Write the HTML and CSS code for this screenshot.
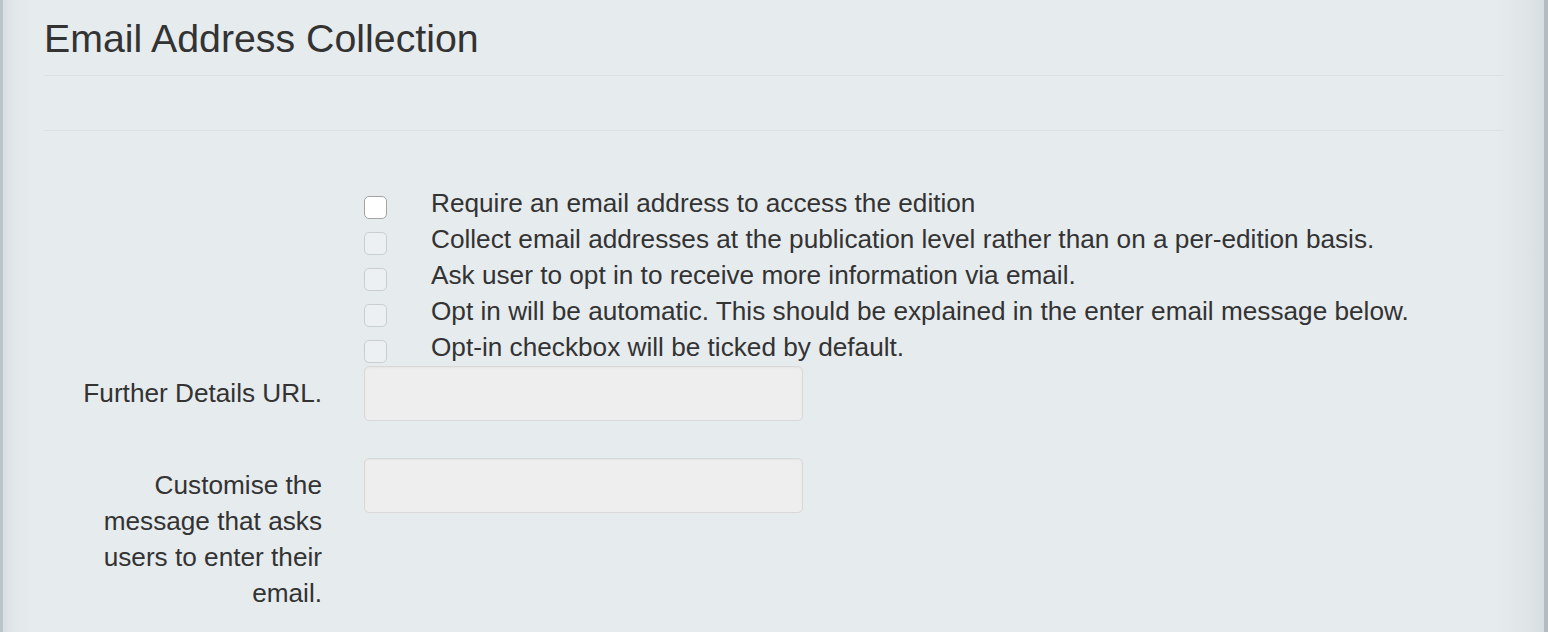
FILE: index.html
```html
<!DOCTYPE html>
<html lang="en">
<head>
<meta charset="utf-8">
<title>Email Address Collection</title>
<link rel="stylesheet" href="styles.css">
</head>
<body>
<div class="panel">
  <h2 class="title">Email Address Collection</h2>
  <hr class="rule">
  <div class="spacer"></div>
  <hr class="rule">
  <form class="form">
    <div class="row">
      <div class="label"></div>
      <div class="control checks">
        <label class="check"><input type="checkbox" class="box"><span>Require an email address to access the edition</span></label>
        <label class="check"><input type="checkbox" class="box" disabled><span>Collect email addresses at the publication level rather than on a per-edition basis.</span></label>
        <label class="check"><input type="checkbox" class="box" disabled><span>Ask user to opt in to receive more information via email.</span></label>
        <label class="check"><input type="checkbox" class="box" disabled><span>Opt in will be automatic. This should be explained in the enter email message below.</span></label>
        <label class="check"><input type="checkbox" class="box" disabled><span>Opt-in checkbox will be ticked by default.</span></label>
      </div>
    </div>
    <div class="row">
      <label class="label">Further Details URL.</label>
      <div class="control"><input type="text" class="field" disabled></div>
    </div>
    <div class="row">
      <label class="label">Customise the<br>message that asks<br>users to enter their<br>email.</label>
      <div class="control"><input type="text" class="field" disabled></div>
    </div>
  </form>
</div>
</body>
</html>
```

FILE: styles.css
```css
html, body {
  margin: 0;
  padding: 0;
  height: 100%;
}
body {
  font-family: "Liberation Sans", Arial, sans-serif;
  color: #333333;
  background: linear-gradient(to right,
    #bcc4cb 0, #bcc4cb 3px,
    #d9dfe3 3px, #e2e7ea 14px, #e6ebee 32px,
    #e6ebee calc(100% - 52px), #dfe4e7 calc(100% - 20px), #d8dde1 calc(100% - 4px),
    #b4bcc3 calc(100% - 4px), #b4bcc3 100%);
  overflow: hidden;
}
.panel {
  padding: 17px 45px 0 44px;
}
.title {
  margin: 0 0 15px;
  font-size: 39.3px;
  line-height: 43px;
  font-weight: normal;
  color: #333333;
}
.rule {
  margin: 0;
  border: 0;
  border-top: 1px solid #dfe1e1;
  height: 0;
}
.spacer {
  height: 54px;
}
.form {
  margin-top: 54px;
  font-size: 26.2px;
  line-height: 36px;
}
.row {
  display: grid;
  grid-template-columns: 278px 439px;
  column-gap: 42px;
  margin-bottom: 37px;
}
.row:first-child {
  margin-bottom: 1px;
}
.label {
  text-align: right;
  padding-top: 9px;
}
.row:first-child .label {
  padding-top: 0;
}
.checks {
  display: flex;
  flex-direction: column;
  white-space: nowrap;
}
.check {
  display: flex;
  align-items: flex-start;
  gap: 44px;
  height: 36px;
}
.box {
  appearance: none;
  -webkit-appearance: none;
  margin: 11px 0 0 0;
  width: 23px;
  height: 23px;
  flex: none;
  border: 1px solid #a4a4a4;
  border-radius: 5px;
  background: #ffffff;
  box-sizing: border-box;
}
.box:disabled {
  border-color: #c9ced1;
  background: #edf0f2;
}
.field {
  display: block;
  box-sizing: border-box;
  width: 439px;
  height: 55px;
  margin: 0;
  border: 1px solid #d8d8d8;
  border-radius: 5px;
  background: #eeeeee;
  box-shadow: inset 0 1px 2px rgba(0,0,0,0.04);
}
```
